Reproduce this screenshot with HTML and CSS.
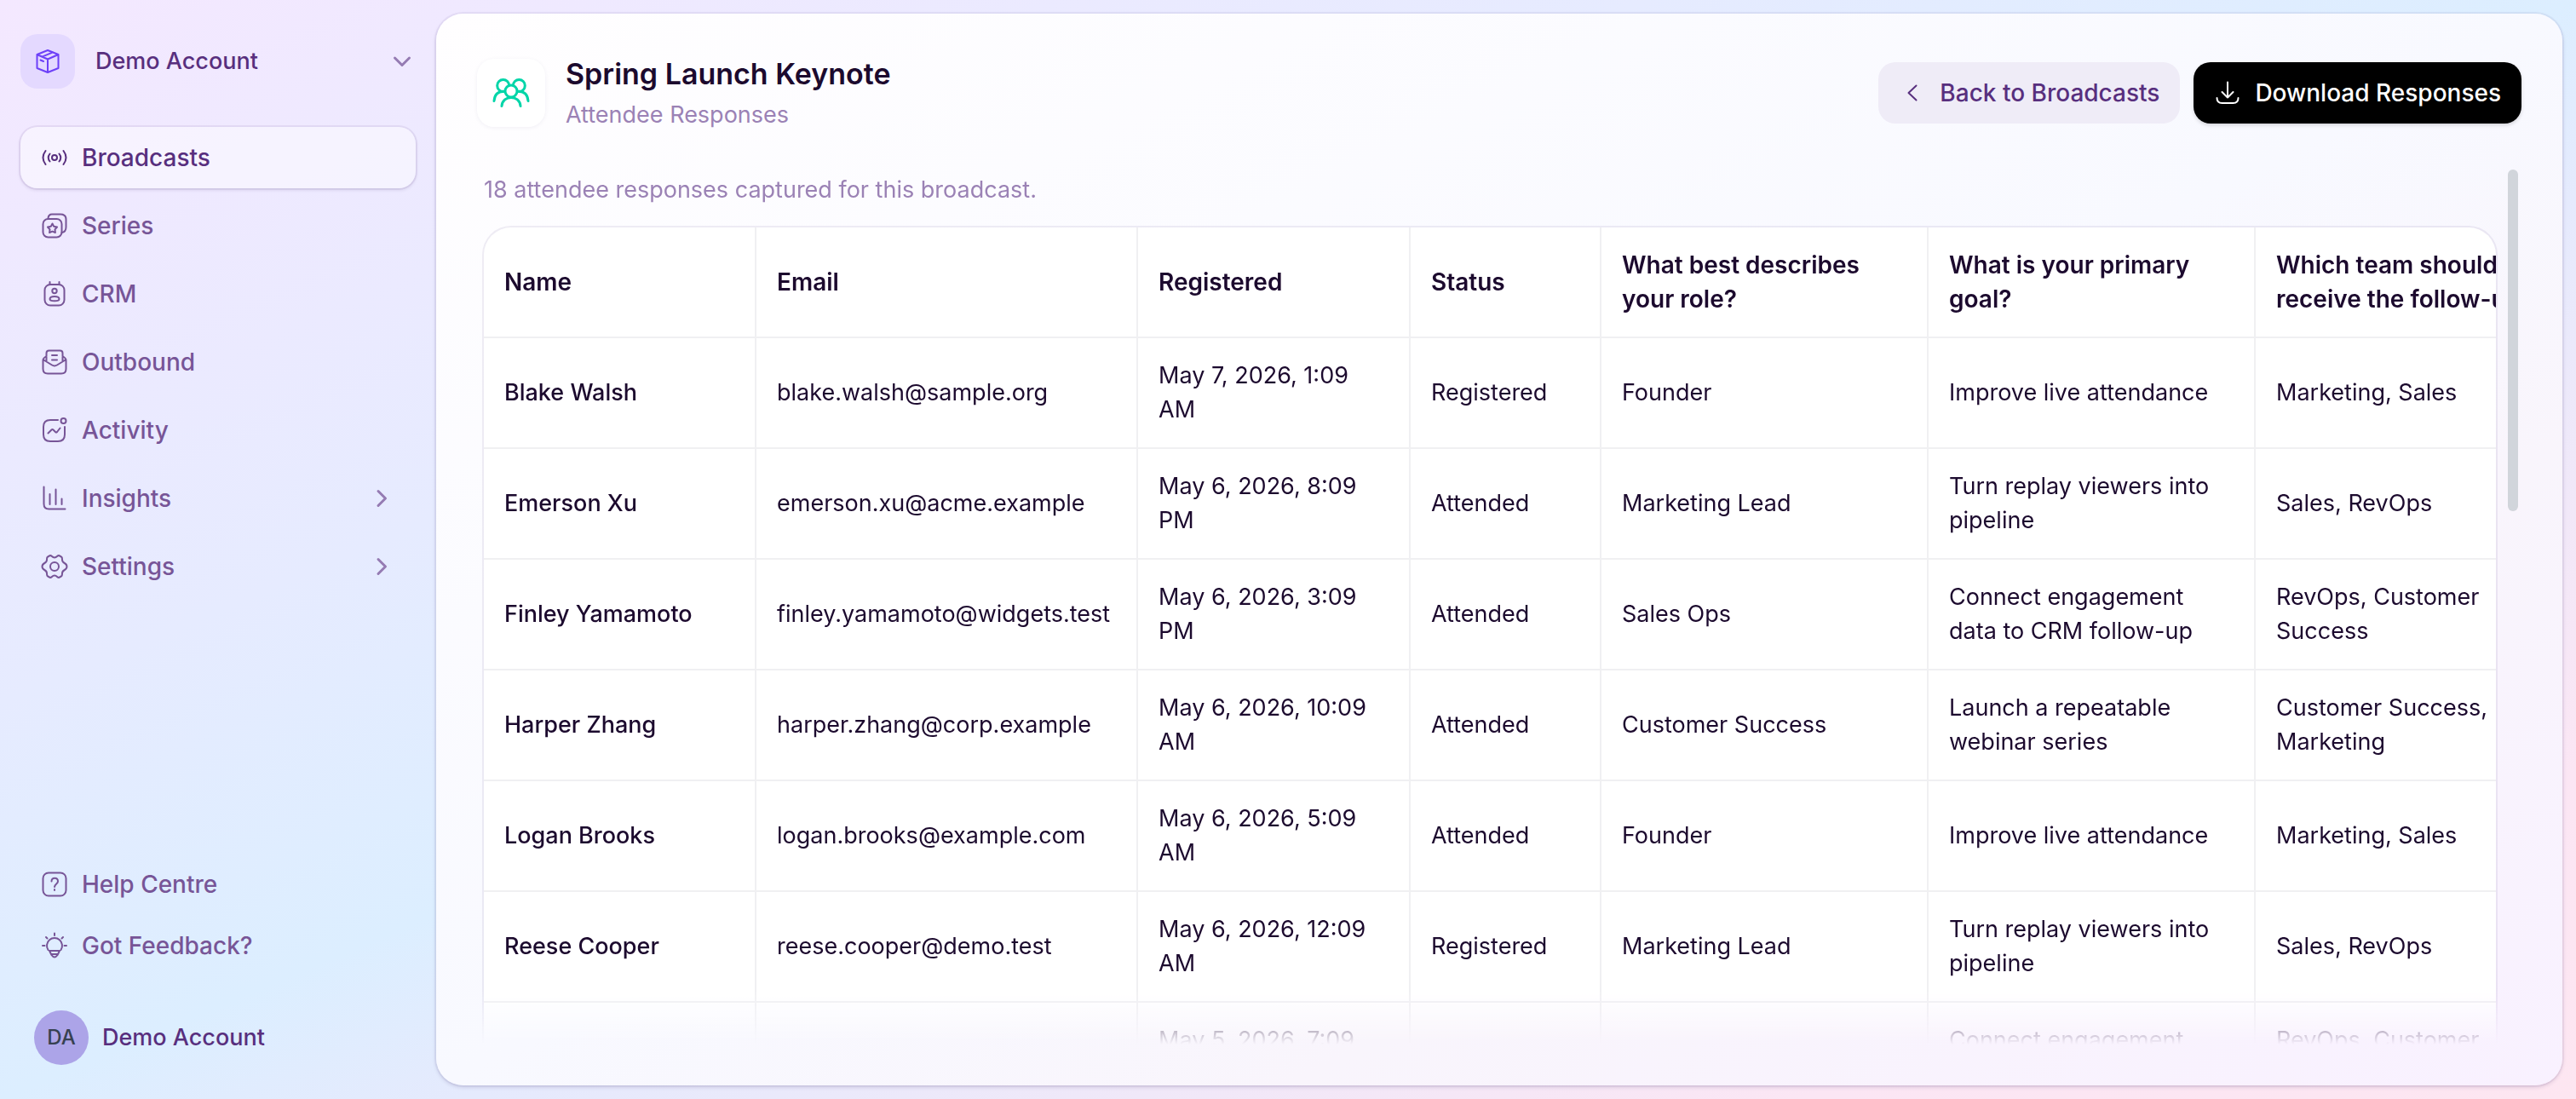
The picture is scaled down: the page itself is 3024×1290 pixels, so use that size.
FILE: index.html
```html
<!DOCTYPE html>
<html lang="en">
<head>
    <meta charset="UTF-8">
    <meta name="viewport" content="width=device-width, initial-scale=1.0">
    <title>Spring Launch Keynote - Attendee Responses</title>
    <link rel="stylesheet" href="styles.css">
</head>
<body>
    <!-- Sidebar -->
    <aside class="sidebar">
        <button class="account-switcher" type="button">
            <span class="account-logo">
                <svg class="icon" viewBox="0 0 32 32"><path d="M16 3 28.500 8v16L16 29 3.500 24V8zM3.500 8 16 13.500 28.500 8M16 13.500V29M9.500 10.700 22 5.400M7.500 14.500l3.500 1.500"/></svg>
            </span>
            <span class="account-name">Demo Account</span>
            <svg class="chevron" viewBox="0 0 32 32"><path d="m7.500 12 8.500 8.500L24.500 12"/></svg>
        </button>

        <nav class="nav">
            <a class="nav-item active" href="#">
                <svg class="icon" viewBox="0 0 32 32"><circle cx="16" cy="16" r="3"/><path d="M10.500 11.500q-3.500 4.500 0 9M21.500 11.500q3.500 4.500 0 9M5.500 8q-6 8 0 16M26.500 8q6 8 0 16"/></svg>
                <span>Broadcasts</span>
            </a>
            <a class="nav-item" href="#">
                <svg class="icon" viewBox="0 0 32 32"><rect x="2.500" y="8" width="22" height="21.500" rx="6"/><path d="M8.500 8C8.500 4.500 10 2.500 13 2.500h10c4 0 6.500 2 6.500 6v9c0 4-1.500 6-5 6.500M13.500 13.500l1.700 3.200 3.800.8-2.500 2.700.4 3.800-3.400-1.400-3.400 1.400.4-3.800L8 17.500l3.800-.8z"/></svg>
                <span>Series</span>
            </a>
            <a class="nav-item" href="#">
                <svg class="icon" viewBox="0 0 32 32"><rect x="4.500" y="5" width="23" height="24.500" rx="6.500"/><circle cx="16" cy="12.500" r="2.700"/><path d="M10.500 2v3M21.500 2v3M10.500 22c0-4 11-4 11 0 0 3-11 3-11 0z"/></svg>
                <span>CRM</span>
            </a>
            <a class="nav-item" href="#">
                <svg class="icon" viewBox="0 0 32 32"><path d="M6.500 15.500V5.500q0-3 3-3h13q3 0 3 3v10M6.500 9C4 10.500 2.500 11.500 2.500 14v10q0 5.500 5.500 5.500h16q5.500 0 5.500-5.500V14c0-2.500-1.500-3.500-4-5M2.500 13l10.500 6.500q3 1.800 6 0L29.500 13M13 8h6M13 13.500h6"/></svg>
                <span>Outbound</span>
            </a>
            <a class="nav-item" href="#">
                <svg class="icon" viewBox="0 0 32 32"><path d="M20 4h-9Q3 4 3 12v9q0 8 8 8h9q8 0 8-8v-9M8.500 19.500l4-4q1-1 2 0l2.500 2.500q1 1 2 0l3.500-4.500"/><circle cx="26.500" cy="5" r="3"/></svg>
                <span>Activity</span>
            </a>
            <a class="nav-item" href="#">
                <svg class="icon" viewBox="0 0 32 32"><path d="M3.500 2.500v20q0 6 6 6h19M10.500 11v12M17.500 5.500V23M24.500 16.500V23"/></svg>
                <span>Insights</span>
                <svg class="chevron" viewBox="0 0 32 32"><path d="m12 7.500 8.500 8.500-8.500 8.500"/></svg>
            </a>
            <a class="nav-item" href="#">
                <svg class="icon" viewBox="0 0 32 32"><path d="M16 5.500c3 0 3-2.500 5-2.500 4 1.500 4 2.500 4 5 0 5 5.500 3 5.500 8s-5.500 3-5.500 8c0 2.500 0 3.500-4 5-2 0-2-2.500-5-2.500S13 29 11 29c-4-1.500-4-2.500-4-5 0-5-5.500-3-5.500-8S7 13 7 8c0-2.500 0-3.500 4-5 2 0 2 2.500 5 2.500z"/><circle cx="16" cy="16" r="5"/></svg>
                <span>Settings</span>
                <svg class="chevron" viewBox="0 0 32 32"><path d="m12 7.500 8.500 8.500-8.500 8.500"/></svg>
            </a>
        </nav>

        <nav class="nav-secondary">
            <a class="nav-item" href="#">
                <svg class="icon" viewBox="0 0 32 32"><rect x="2.500" y="2.500" width="27" height="27" rx="6.500"/><path d="M12.500 12.500c0-5 7.500-5 7.500 0 0 3-3.500 3-4 6.500M16 22v1"/></svg>
                <span>Help Centre</span>
            </a>
            <a class="nav-item" href="#">
                <svg class="icon" viewBox="0 0 32 32"><path d="M8.500 21A9 9 0 1 1 23.500 21M10 22h12l-2.500 5q-3.500 5-7 0zM12 26h8M16 1.500v2.500M2 16h2.500M27.500 16H30M6 6l1.500 1.500M26 6l-1.500 1.500"/></svg>
                <span>Got Feedback?</span>
            </a>
        </nav>

        <button class="profile" type="button">
            <span class="avatar">DA</span>
            <span class="account-name">Demo Account</span>
        </button>
    </aside>

    <!-- Main panel -->
    <main class="panel">
        <header class="panel-header">
            <div class="panel-icon">
                <svg class="icon" viewBox="0 0 48 48"><circle cx="14.700" cy="15.500" r="7"/><circle cx="33.300" cy="15.500" r="7"/><path d="M4 33.500c.5-6.500 4-11 11-11.200M44 33.500c-.5-6.500-4-11-11-11.200M13 39.500c1-13.500 21-13.500 22 0"/><circle cx="24" cy="22" r="7" fill="#fff"/></svg>
            </div>
            <div class="panel-title">
                <h1>Spring Launch Keynote</h1>
                <p>Attendee Responses</p>
            </div>
            <a class="btn btn-light" href="#">
                <svg class="icon" viewBox="0 0 32 32"><path d="m20.500 7.500-9 8.500 9 8.500"/></svg>
                Back to Broadcasts
            </a>
            <button class="btn btn-dark" type="button">
                <svg class="icon" viewBox="0 0 32 32"><path d="M16 3.500v18M9.500 15l6.500 6.500 6.500-6.500M3.500 22q0 6 6 6h13q6 0 6-6"/></svg>
                Download Responses
            </button>
        </header>

        <div class="panel-body">
            <div class="responses">
                <p class="summary">18 attendee responses captured for this broadcast.</p>
                <div class="table-wrap">
                    <table>
                        <colgroup>
                            <col class="col-name">
                            <col class="col-email">
                            <col class="col-date">
                            <col class="col-status">
                            <col class="col-question">
                            <col class="col-question">
                            <col class="col-question">
                        </colgroup>
                        <thead>
                            <tr>
                                <th>Name</th>
                                <th>Email</th>
                                <th>Registered</th>
                                <th>Status</th>
                                <th>What best describes your role?</th>
                                <th>What is your primary goal?</th>
                                <th>Which team should receive the follow-up?</th>
                            </tr>
                        </thead>
                        <tbody>
                            <tr>
                                <td>Blake Walsh</td>
                                <td>blake.walsh@sample.org</td>
                                <td>May 7, 2026, 1:09 AM</td>
                                <td>Registered</td>
                                <td>Founder</td>
                                <td>Improve live attendance</td>
                                <td>Marketing, Sales</td>
                            </tr>
                            <tr>
                                <td>Emerson Xu</td>
                                <td>emerson.xu@acme.example</td>
                                <td>May 6, 2026, 8:09 PM</td>
                                <td>Attended</td>
                                <td>Marketing Lead</td>
                                <td>Turn replay viewers into pipeline</td>
                                <td>Sales, RevOps</td>
                            </tr>
                            <tr>
                                <td>Finley Yamamoto</td>
                                <td>finley.yamamoto@widgets.test</td>
                                <td>May 6, 2026, 3:09 PM</td>
                                <td>Attended</td>
                                <td>Sales Ops</td>
                                <td>Connect engagement data to CRM follow-up</td>
                                <td>RevOps, Customer Success</td>
                            </tr>
                            <tr>
                                <td>Harper Zhang</td>
                                <td>harper.zhang@corp.example</td>
                                <td>May 6, 2026, 10:09 AM</td>
                                <td>Attended</td>
                                <td>Customer Success</td>
                                <td>Launch a repeatable webinar series</td>
                                <td>Customer Success, Marketing</td>
                            </tr>
                            <tr>
                                <td>Logan Brooks</td>
                                <td>logan.brooks@example.com</td>
                                <td>May 6, 2026, 5:09 AM</td>
                                <td>Attended</td>
                                <td>Founder</td>
                                <td>Improve live attendance</td>
                                <td>Marketing, Sales</td>
                            </tr>
                            <tr>
                                <td>Reese Cooper</td>
                                <td>reese.cooper@demo.test</td>
                                <td>May 6, 2026, 12:09 AM</td>
                                <td>Registered</td>
                                <td>Marketing Lead</td>
                                <td>Turn replay viewers into pipeline</td>
                                <td>Sales, RevOps</td>
                            </tr>
                            <tr>
                                <td></td>
                                <td></td>
                                <td>May 5, 2026, 7:09 PM</td>
                                <td></td>
                                <td></td>
                                <td>Connect engagement data to CRM follow-up</td>
                                <td>RevOps, Customer Success</td>
                            </tr>
                        </tbody>
                    </table>
                </div>
            </div>
            <div class="scroll-thumb"></div>
        </div>
    </main>
</body>
</html>
```
FILE: styles.css
```css
/* General Styles */
* {
    box-sizing: border-box;
}

body {
    margin: 0;
    height: 100vh;
    display: flex;
    overflow: hidden;
    font-family: Inter, "Liberation Sans", sans-serif;
    font-size: 28px;
    line-height: 40px;
    color: #1c0a2e;
    background: linear-gradient(to bottom right, #f4e8ff, #e6ebff 32%, #dceeff 50%, #e5eafd 59%, #fbe6f4 85%, #fde6f1);
}

h1,
p {
    margin: 0;
}

a {
    text-decoration: none;
}

button {
    font: inherit;
    border: none;
    background: none;
    cursor: pointer;
}

.icon,
.chevron {
    width: 32px;
    height: 32px;
    flex-shrink: 0;
    fill: none;
    stroke: currentColor;
    stroke-width: 2;
    stroke-linecap: round;
    stroke-linejoin: round;
}

/* Sidebar Styles */
.sidebar {
    width: 512px;
    flex-shrink: 0;
    padding: 40px 24px;
    display: flex;
    flex-direction: column;
}

.account-switcher {
    display: flex;
    align-items: center;
    gap: 24px;
    padding: 0;
    text-align: left;
}

.account-name {
    font-size: 27px;
    font-weight: 500;
    color: #582f7e;
}

.account-logo {
    width: 64px;
    height: 64px;
    display: flex;
    align-items: center;
    justify-content: center;
    border-radius: 20px;
    color: #6d40f8;
    background-color: #e4d9ff;
}

.chevron {
    margin-left: auto;
    color: #957bb3;
    stroke-width: 3;
}

.nav {
    display: flex;
    flex-direction: column;
    gap: 8px;
    margin-top: 45px;
}

.nav-secondary {
    margin-top: auto;
}

.nav-item {
    height: 72px;
    display: flex;
    align-items: center;
    gap: 16px;
    padding: 0 24px;
    border-radius: 20px;
    color: #775597;
    font-weight: 500;
}

.nav-item.active {
    color: #582f7e;
    background-color: rgba(255, 255, 255, 0.45);
    box-shadow: 0 0 0 2px rgba(90, 50, 130, 0.08), 0 2px 4px rgba(40, 20, 80, 0.12);
}

.profile {
    display: flex;
    align-items: center;
    gap: 16px;
    margin-top: 40px;
    padding: 0 16px;
}

.avatar {
    width: 64px;
    height: 64px;
    display: flex;
    align-items: center;
    justify-content: center;
    border-radius: 50%;
    font-size: 24px;
    font-weight: 500;
    color: #374151;
    background-color: #aca4e8;
}

/* Panel Styles */
.panel {
    flex: 1;
    min-width: 0;
    margin: 16px 16px 16px 0;
    padding: 47px 48px 48px;
    display: flex;
    flex-direction: column;
    gap: 44px;
    border-radius: 32px;
    background: linear-gradient(to bottom right, #fffeff, #f8f9ff 50%, #f9f5fc 70%, #f9f1ff);
    box-shadow: 0 0 0 2px rgba(80, 60, 140, 0.06), 0 2px 5px rgba(40, 20, 80, 0.16);
}

.panel-header {
    display: flex;
    align-items: center;
    gap: 16px;
}

.panel-icon {
    width: 80px;
    height: 80px;
    display: flex;
    align-items: center;
    justify-content: center;
    border-radius: 20px;
    color: #00d5a8;
    background-color: #fff;
    box-shadow: 0 1px 5px rgba(40, 20, 80, 0.06);
}

.panel-icon .icon {
    width: 48px;
    height: 48px;
    stroke-width: 3;
}

.panel-title {
    flex: 1;
    display: flex;
    flex-direction: column;
    gap: 4px;
    padding-left: 8px;
    font-size: 27px;
    color: #9b82b5;
}

.panel-title h1 {
    font-size: 34px;
    line-height: 48px;
    font-weight: 600;
    color: #1c0a2e;
}

.btn {
    height: 72px;
    display: flex;
    align-items: center;
    gap: 16px;
    padding: 0 24px;
    border-radius: 20px;
    font-weight: 500;
}

.btn-light {
    color: #582f7e;
    background-color: #efecf7;
}

.btn-dark {
    color: #fff;
    background-color: #000;
    box-shadow: 0 2px 4px rgba(0, 0, 0, 0.15);
}

.panel-body {
    flex: 1;
    min-height: 0;
    position: relative;
}

/* Fades the rows out at the bottom edge */
.responses {
    height: 100%;
    padding: 4px 30px 0 8px;
    overflow: hidden;
    -webkit-mask-image: linear-gradient(to top, transparent, #000 64px);
    mask-image: linear-gradient(to top, transparent, #000 64px);
}

.summary {
    margin-bottom: 24px;
    font-size: 27px;
    color: #9b82b5;
}

.scroll-thumb {
    position: absolute;
    top: 0;
    right: 4px;
    width: 12px;
    height: 39%;
    border-radius: 6px;
    background-color: #d1d5db;
}

/* Table Styles */
.table-wrap {
    overflow: hidden;
    border-radius: 32px;
    background-color: #fff;
    box-shadow: 0 0 0 2px rgba(60, 40, 110, 0.08);
}

table {
    width: 2464px;
    table-layout: fixed;
    border-collapse: separate;
    border-spacing: 0;
}

.col-name,
.col-date {
    width: 320px;
}

.col-email {
    width: 448px;
}

.col-status {
    width: 224px;
}

.col-question {
    width: 384px;
}

th,
td {
    height: 130px;
    padding: 24px;
    text-align: left;
    vertical-align: middle;
    border-right: 2px solid #f0f0f2;
    border-bottom: 2px solid #f0f0f2;
}

th {
    font-weight: 600;
}

td {
    font-size: 27px;
}

td:first-child {
    font-weight: 500;
}
```
